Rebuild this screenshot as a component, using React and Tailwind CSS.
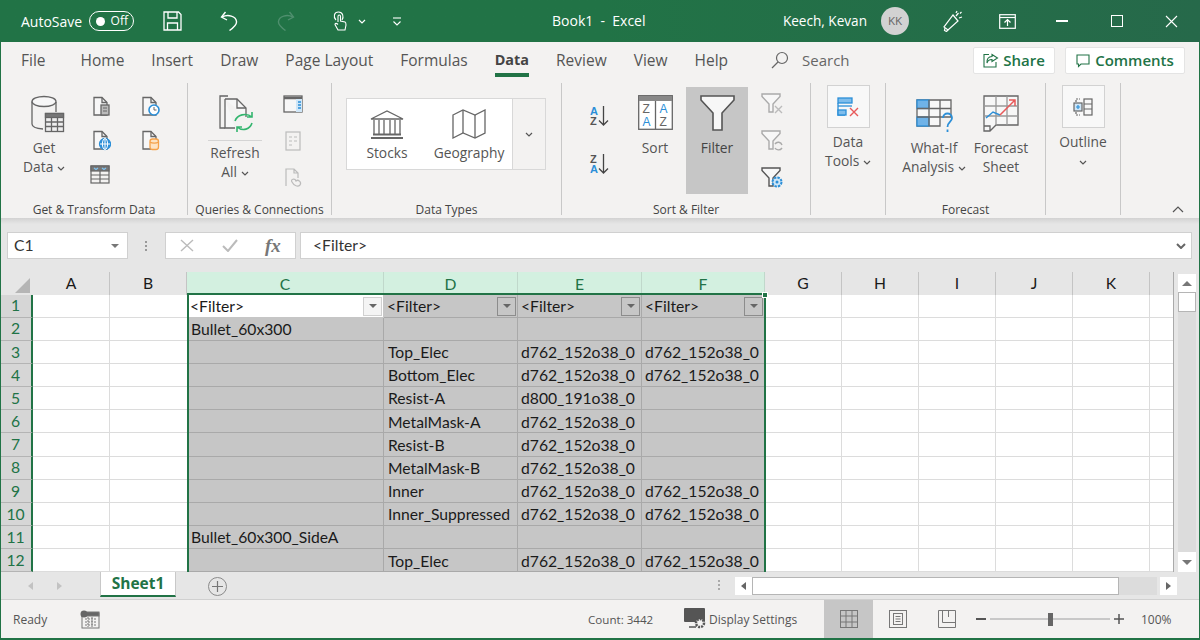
import React from "react";

const G = "#666";
const BLUE = "#2b8fd8";
const Doc = ({ c = G, children, w = 20, h = 22 }) => (
  <svg width={w} height={h} viewBox="0 0 20 22" fill="none" strokeWidth="1.3">
    <path d="M3 1.5H11L16 6.5V19H3Z" stroke={c} fill="#f7f7f7" />
    <path d="M11 1.5V6.5H16" stroke={c} />
    {children}
  </svg>
);
const Chev = ({ className = "", c = "#555" }) => (
  <svg width="8" height="5" viewBox="0 0 8 5" className={className}><path d="M1 1L4 4L7 1" stroke={c} fill="none" strokeWidth="1.2" /></svg>
);
const Funnel = ({ c = "#aaa", children }) => (
  <svg width="24" height="24" viewBox="0 0 24 24" fill="none" strokeWidth="1.4">
    <path d="M2 3H20V5.5L13 13V21H9V13L2 5.5Z" stroke={c} fill="#f7f7f7" />
    {children}
  </svg>
);
const Tab = ({ children, active, className = "" }) => (
  <div className={`h-[35px] pt-[6px] leading-[24px] border-b-[4px] ${active ? "border-[#217346] font-bold text-[#444] text-[14.4px]" : "border-transparent text-[#555]"} ${className}`}>{children}</div>
);
const Group = ({ w, label, children }) => (
  <div style={{ width: w }} className="h-[132px] border-r border-[#c8c8c8] flex flex-col shrink-0">
    <div className="flex-1 flex min-h-0">{children}</div>
    <div className="h-[15px] -mb-[1.5px] text-center text-[12px] leading-[15px] text-[#444] whitespace-nowrap">{label}</div>
  </div>
);
const BoxBtn = ({ children, label }) => (
  <div className="w-[74px] flex flex-col items-center">
    <div className="mt-[2px] w-[43px] h-[43px] bg-[#f8f8f8] border border-[#d2d2d2] flex items-center justify-center">{children}</div>
    <div className="mt-[4px] leading-[19px] text-[13.8px] text-[#555] text-center">{label}</div>
  </div>
);

const rows = [
  ["<Filter>", "<Filter>", "<Filter>", "<Filter>"],
  ["Bullet_60x300", "", "", ""],
  ["", "Top_Elec", "d762_152o38_0", "d762_152o38_0"],
  ["", "Bottom_Elec", "d762_152o38_0", "d762_152o38_0"],
  ["", "Resist-A", "d800_191o38_0", ""],
  ["", "MetalMask-A", "d762_152o38_0", ""],
  ["", "Resist-B", "d762_152o38_0", ""],
  ["", "MetalMask-B", "d762_152o38_0", ""],
  ["", "Inner", "d762_152o38_0", "d762_152o38_0"],
  ["", "Inner_Suppressed", "d762_152o38_0", "d762_152o38_0"],
  ["Bullet_60x300_SideA", "", "", ""],
  ["", "Top_Elec", "d762_152o38_0", "d762_152o38_0"],
];
const colHead = ["A", "B", "C", "D", "E", "F", "G", "H", "I", "J", "K", ""];
const gridCols = "grid-cols-[32px_77px_77px_197px_134px_124px_123px_77px_77px_77px_77px_77px_24px]";

const Dd = ({ white }) => (
  <div className={`w-[19px] h-[19px] shrink-0 mr-[1px] -mt-[1px] border flex items-center justify-center ${white ? "bg-[#f4f4f4] border-[#d0d0d0]" : "bg-[#c6c6c6] border-[#8c8c8c]"}`}>
    <div className="w-0 h-0 border-x-[4px] border-x-transparent border-t-[4px] border-t-[#666]" />
  </div>
);

export default function App() {
  return (
    <div className="w-[1200px] h-[640px] overflow-hidden flex flex-col bg-[#217346] pl-[1px] pr-[1px] pb-[2px] font-['Open_Sans',sans-serif]">
      {/* Title bar */}
      <div className="h-[42px] -ml-[1px] -mr-[1px] shrink-0 flex items-center text-white text-[14px] bg-linear-to-r from-[#217346] via-[#217346] to-[#26694a]">
        <span className="ml-[21px] w-[61px] whitespace-nowrap">AutoSave</span>
        <div className="ml-[7px] w-[45px] h-[20px] rounded-full border border-white flex items-center justify-between pl-[6px] pr-[5px]">
          <div className="w-[9px] h-[9px] bg-white rounded-full" />
          <span className="text-[12px] leading-none">Off</span>
        </div>
        <svg className="ml-[29px]" width="19" height="20" viewBox="0 0 19 20" fill="none" stroke="#fff" strokeWidth="1.3"><path d="M1 1H15.5L18 3.5V19H1Z" /><path d="M5 1V7H14V1M4.5 19V12H14.5V19" /></svg>
        <svg className="ml-[38px]" width="18" height="20" viewBox="0 0 18 20" fill="none" stroke="#fff" strokeWidth="1.4"><path d="M5.5 1L1.5 6L7 9" /><path d="M2 6C8 3 16 5 16.5 10.5C17 14 13 17 9.5 19.5" /></svg>
        <svg className="ml-[39px]" width="18" height="20" viewBox="0 0 18 20" fill="none" stroke="#4f8f6e" strokeWidth="1.4"><path d="M12.5 1L16.5 6L11 9" /><path d="M16 6C10 3 2 5 1.5 10.5C1 14 5 17 8.5 19.5" /></svg>
        <svg className="ml-[38px]" width="14" height="20" viewBox="0 0 14 20" fill="none" stroke="#fff" strokeWidth="1.1"><path d="M3 9C0 6 1 1 5.5 1C10 1 11 6 9 9" /><path d="M5 11V5.5C5 3.5 7.5 3.5 7.5 5.5V10L12 11C13 11.5 13 13 13 14L12 19H5L2 13.5C2 12 3.5 12 5 13.5" /></svg>
        <Chev className="ml-[11px]" c="#fff" />
        <svg className="ml-[26px]" width="10" height="9" viewBox="0 0 10 9" fill="none" stroke="#fff" strokeWidth="1.1"><path d="M1 1H9" /><path d="M1.5 4.5L5 8L8.5 4.5" /></svg>
        <span className="ml-[150px] -mt-[1px] whitespace-nowrap">Book1&nbsp; -&nbsp; Excel</span>
        <div className="ml-auto flex items-center pr-[22px]">
          <span className="whitespace-nowrap text-[13.6px]">Keech, Kevan</span>
          <div className="ml-[14px] w-[28px] h-[28px] rounded-full bg-[#d2d2d2] text-[#666] text-[11.5px] flex items-center justify-center">KK</div>
          <svg className="ml-[34px]" width="20" height="22" viewBox="0 0 20 22" fill="none" stroke="#fff" strokeWidth="1.2"><path d="M10 5L15 11L5 20L1 17Z" /><path d="M5 20L3.5 21.5L1.5 20.5L2 18" /><path d="M13 6L15.5 3M16 8L19 7M13 3L14 1M17 3.5L18.5 2" /></svg>
          <svg className="ml-[36px]" width="17" height="15" viewBox="0 0 17 15" fill="none" stroke="#fff" strokeWidth="1.2"><rect x="0.7" y="0.7" width="15.6" height="13.6" /><path d="M1 3.5H16" /><path d="M8.5 12V6M5.5 8.5L8.5 5.5L11.5 8.5" /></svg>
          <div className="ml-[40px] w-[12px] h-[1.5px] bg-white" />
          <div className="ml-[43px] w-[12px] h-[12px] border border-white" />
          <svg className="ml-[42px]" width="13" height="13" viewBox="0 0 13 13" stroke="#fff" strokeWidth="1.1"><path d="M1 1L12 12M12 1L1 12" /></svg>
        </div>
      </div>

      {/* Ribbon */}
      <div className="h-[176px] shrink-0 bg-[#f3f2f1]">
        <div className="h-[41px] flex items-start text-[15.5px] pl-[20px]">
          <div className="flex gap-[27px]">
            <Tab className="mr-[8px]">File</Tab>
            {["Home", "Insert", "Draw", "Page Layout", "Formulas"].map((t) => <Tab key={t}>{t}</Tab>)}
            <Tab active>Data</Tab>
            {["Review", "View", "Help"].map((t) => <Tab key={t}>{t}</Tab>)}
          </div>
          <div className="ml-[43px] h-[35px] flex items-center text-[#666] pt-[1px] text-[15px]">
            <svg width="18" height="18" viewBox="0 0 18 18" fill="none" stroke="#666" strokeWidth="1.2"><circle cx="11" cy="7" r="5.5" /><path d="M7 11L1 17" /></svg>
            <span className="ml-[13px]">Search</span>
          </div>
          <div className="ml-auto mt-[5px] flex gap-[10px] pr-[14px] font-semibold text-[#217346] text-[15px]">
            <div className="w-[82px] h-[27px] bg-white border border-[#e4e4e4] rounded-[2px] flex items-center justify-center gap-[4px]">
              <svg width="16" height="15" viewBox="0 0 16 15" fill="none" stroke="#217346" strokeWidth="1.1"><path d="M9 1.5L14.5 5L9 8.5V6.5C6 6.5 4.5 8 4 10C3.5 6 5.5 3.5 9 3.5Z" /><path d="M6 1.5H1V14H13V9" /></svg>
              <span>Share</span>
            </div>
            <div className="w-[120px] h-[27px] bg-white border border-[#e4e4e4] rounded-[2px] flex items-center justify-center gap-[5px]">
              <svg width="14" height="14" viewBox="0 0 14 14" fill="none" stroke="#217346" strokeWidth="1.1"><path d="M1 1H13V10H5L2.5 12.5V10H1Z" /></svg>
              <span>Comments</span>
            </div>
          </div>
        </div>

        <div className="h-[132px] flex">
          <Group w={187} label="Get & Transform Data">
            <div className="w-[86px] flex flex-col items-center pt-[12px]">
              <svg className="ml-[7px]" width="34" height="38" viewBox="0 0 34 38" fill="none" stroke={G} strokeWidth="1.3">
                <ellipse cx="13" cy="6.5" rx="12" ry="5" fill="#f7f7f7" />
                <path d="M1 6.5V29C1 31.5 5 33.5 12 34M25 7V17" />
                <rect x="14.5" y="18.5" width="18" height="18" fill="#eee" />
                <rect x="14.5" y="18.5" width="18" height="4" fill="#777" />
                <path d="M14.5 27H32.5M14.5 31.5H32.5M20.5 22V36.5M26.5 22V36.5" />
              </svg>
              <div className="mt-[5px] leading-[19px] text-[13.8px] text-[#555] text-center">Get<br />Data <Chev className="inline align-middle" /></div>
            </div>
            <div className="ml-[4px] w-[20px] flex flex-col gap-[12px] pt-[13px]">
              <Doc><rect x="10" y="9" width="8" height="10" fill="#bbb" stroke={G} /><path d="M12 12H16M12 15H16" stroke={G} strokeWidth="1" /></Doc>
              <Doc><circle cx="14" cy="14" r="5.5" fill={BLUE} stroke={BLUE} /><path d="M9 14H19M14 9V19" stroke="#fff" strokeWidth="1" /><ellipse cx="14" cy="14" rx="2.6" ry="5.5" stroke="#fff" strokeWidth="1" /></Doc>
              <svg className="-ml-[1px]" width="20" height="20" viewBox="0 0 20 20" fill="none" stroke={G} strokeWidth="1.2"><rect x="1" y="2" width="18" height="17" /><rect x="1" y="2" width="18" height="5" fill="#777" /><path d="M1 11H19M1 15H19M10 7V19" /><path d="M4 4L6 5.5L8 4M12 4L14 5.5L16 4" stroke="#7fc4f2" /></svg>
            </div>
            <div className="ml-[29px] w-[20px] flex flex-col gap-[12px] pt-[13px]">
              <Doc><circle cx="14" cy="14" r="5" fill="#fff" stroke={BLUE} strokeWidth="1.6" /><path d="M14 11V14H16.5" stroke={G} strokeWidth="1" /></Doc>
              <Doc><rect x="10" y="9" width="8.5" height="10.5" rx="2.5" fill="#fde3c4" stroke="#f5a24a" /><path d="M10 12C12 13.5 16.5 13.5 18.5 12" stroke="#f5a24a" /></Doc>
            </div>
          </Group>

          <Group w={144} label="Queries & Connections">
            <div className="ml-[10px] w-[74px] flex flex-col items-center pt-[12px]">
              <svg className="ml-[3px]" width="36" height="38" viewBox="0 0 36 38" fill="none" strokeWidth="1.3">
                <path d="M9 1H1V33H6" stroke={G} />
                <path d="M6 4H18L27 13V22M16 33H6V4" stroke={G} fill="#f7f7f7" />
                <path d="M18 4V13H27" stroke={G} />
                <path d="M16 26C18 20 27 17 33 22M33 17V22H28" stroke="#33b56e" strokeWidth="1.6" />
                <path d="M33 28C31 34 24 37 18 32M18 37V32H23" stroke="#33b56e" strokeWidth="1.6" />
              </svg>
              <div className="mt-[7px] w-[54px] h-px bg-[#d4d4d4]" />
              <div className="mt-[2px] leading-[19px] text-[13.8px] text-[#555] text-center">Refresh<br />All <Chev className="inline align-middle" /></div>
            </div>
            <div className="ml-[11px] w-[20px] flex flex-col gap-[17px] pt-[11px]">
              <svg width="20" height="20" viewBox="0 0 20 20" fill="none" stroke={G} strokeWidth="1.3"><rect x="1" y="2" width="18" height="16" fill="#f7f7f7" /><path d="M1 4H19" strokeWidth="2.5" /><rect x="13" y="5" width="6" height="13" fill="#cfe6f7" stroke="none" /><path d="M15 8H18M15 11H18M15 14H18" stroke={BLUE} /></svg>
              <svg width="20" height="20" viewBox="0 0 20 20" fill="none" stroke="#bbb" strokeWidth="1.2"><rect x="3" y="1" width="14" height="18" /><path d="M6 6H9M11 6H14M6 10H9M11 10H14M6 14H9" /></svg>
              <svg width="20" height="20" viewBox="0 0 20 20" fill="none" stroke="#bbb" strokeWidth="1.2"><path d="M3 18V1H11L15 5V10M11 1V5H15" /><path d="M9 14C7 11 12 10 13 13C15 11 19 14 17 17C15 19 11 18 9 14Z" /></svg>
            </div>
          </Group>

          <Group w={230} label="Data Types">
            <div className="ml-[14px] mt-[15px] w-[200px] h-[72px] flex bg-white border-[1.5px] border-[#d8d8d8] text-[13.8px] text-[#555]">
              <div className="w-[80px] flex flex-col items-center pt-[10px]">
                <svg width="34" height="30" viewBox="0 0 34 30" fill="none" stroke={G} strokeWidth="1.3"><path d="M1 10L17 2L33 10Z" /><path d="M4 11V25M9 11V25M14 11V25M20 11V25M25 11V25M30 11V25" /><path d="M3 25.5H31M1 29H33" strokeWidth="2" /></svg>
                <span className="mt-[4px] leading-[20px]">Stocks</span>
              </div>
              <div className="w-[84px] flex flex-col items-center pt-[10px]">
                <svg width="34" height="30" viewBox="0 0 34 30" fill="none" stroke={G} strokeWidth="1.3"><path d="M1 6L11 1L23 6L33 1V24L23 29L11 24L1 29Z" /><path d="M11 1V24M23 6V29" /></svg>
                <span className="mt-[4px] leading-[20px] whitespace-nowrap">Geography</span>
              </div>
              <div className="ml-auto w-[33px] border-l-[1.5px] border-[#d8d8d8] bg-[#f3f2f1] flex items-center justify-center">
                <Chev />
              </div>
            </div>
          </Group>

          <Group w={249} label="Sort & Filter">
            <div className="ml-[24px] w-[24px] flex flex-col gap-[24px] pt-[21px]">
              <svg width="24" height="24" viewBox="0 0 24 24" fill="none"><text x="4" y="11" fontSize="11" fontWeight="700" fill={BLUE} fontFamily="Liberation Sans">A</text><text x="4" y="21" fontSize="11" fontWeight="700" fill="#555" fontFamily="Liberation Sans">Z</text><path d="M17.5 2V21M13 16.5L17.5 21L22 16.5" stroke="#444" strokeWidth="1.3" /></svg>
              <svg width="24" height="24" viewBox="0 0 24 24" fill="none"><text x="4" y="11" fontSize="11" fontWeight="700" fill="#555" fontFamily="Liberation Sans">Z</text><text x="4" y="21" fontSize="11" fontWeight="700" fill={BLUE} fontFamily="Liberation Sans">A</text><path d="M17.5 2V21M13 16.5L17.5 21L22 16.5" stroke="#444" strokeWidth="1.3" /></svg>
            </div>
            <div className="ml-[20px] w-[50px] flex flex-col items-center pt-[12px]">
              <svg width="35" height="35" viewBox="0 0 35 35"><rect x="0.7" y="0.7" width="33.6" height="33.6" fill="#fff" stroke={G} strokeWidth="1.3" /><rect x="1" y="1" width="33" height="5" fill="#888" /><path d="M17.5 6V34" stroke={G} strokeWidth="1.3" /><g fontFamily="Liberation Sans" fontSize="12"><text x="4.5" y="18" fill="#666">Z</text><text x="4.5" y="31" fill={BLUE}>A</text><text x="21.5" y="18" fill={BLUE}>A</text><text x="21.5" y="31" fill="#666">Z</text></g></svg>
              <span className="mt-[8px] leading-[20px] text-[13.8px] text-[#555]">Sort</span>
            </div>
            <div className="ml-[6px] mt-[4px] w-[62px] h-[107px] bg-[#c6c6c6] flex flex-col items-center pt-[8px]">
              <svg width="35" height="36" viewBox="0 0 35 36" fill="none" stroke="#555" strokeWidth="1.6"><path d="M1 1H34V5L22 18V35H13V18L1 5Z" fill="#f7f7f7" /></svg>
              <span className="mt-[7px] leading-[20px] text-[13.8px] text-[#444]">Filter</span>
            </div>
            <div className="ml-[12px] w-[24px] flex flex-col gap-[13px] pt-[8px]">
              <Funnel><path d="M15 15L22 22M22 15L15 22" stroke="#bbb" /></Funnel>
              <Funnel><path d="M15 16C17 13 21 14 22 17M22 20C20 23 16 22 15 20" stroke="#aaa" fill="none" /></Funnel>
              <Funnel c="#555"><circle cx="17" cy="17" r="4.5" fill="#cfe6f7" stroke={BLUE} strokeWidth="2" strokeDasharray="2.5 1" /><circle cx="17" cy="17" r="1.5" fill={BLUE} stroke="none" /></Funnel>
            </div>
          </Group>

          <Group w={75} label="">
            <BoxBtn label={<>Data<br />Tools <Chev className="inline align-middle" /></>}>
              <svg width="22" height="20" viewBox="0 0 22 20" fill="none" strokeWidth="1.3"><rect x="1" y="1" width="14" height="5" fill="#7fbdec" stroke={BLUE} /><path d="M1 6V18H8" stroke={BLUE} /><rect x="1" y="13" width="8" height="5" fill="#7fbdec" stroke={BLUE} /><path d="M1 9H15" stroke={BLUE} /><path d="M13 11L21 19M21 11L13 19" stroke="#e8595a" strokeWidth="1.4" /></svg>
            </BoxBtn>
          </Group>

          <Group w={160} label="Forecast">
            <div className="ml-[14px] w-[68px] flex flex-col items-center pt-[12px]">
              <svg width="38" height="38" viewBox="0 0 38 38" fill="none" strokeWidth="1.3" className="ml-[2px]">
                <path d="M1 5H35V22H24V31H1Z" fill="#f7f7f7" stroke={G} />
                <rect x="1" y="5" width="12" height="8.5" fill="#6fb3e8" stroke={BLUE} />
                <rect x="1" y="22" width="12" height="9" fill="#6fb3e8" stroke={BLUE} />
                <path d="M13 5V31M24 5V22M1 13.5H35M1 22H24" stroke={G} />
                <path d="M27 23C27 17 36 17 36 23C36 27 31.5 27 31.5 32M31.5 34.5V37" stroke={BLUE} strokeWidth="1.8" />
              </svg>
              <div className="mt-[5px] leading-[19px] text-[13.8px] text-[#555] text-center whitespace-nowrap">What-If<br />Analysis <Chev className="inline align-middle" /></div>
            </div>
            <div className="w-[66px] flex flex-col items-center pt-[12px]">
              <svg width="36" height="38" viewBox="0 0 36 38" fill="none" strokeWidth="1.3">
                <path d="M1 31V1H35V30H13L7 36H1V31H7V36" stroke={G} fill="#f7f7f7" />
                <path d="M1 11H35M1 21H35M13 1V30M24 1V30" stroke="#999" />
                <path d="M3 23L10 17L17 20" stroke={BLUE} strokeWidth="1.5" />
                <path d="M17 20L24 13L32 5M26 5H32V11" stroke="#e8595a" strokeWidth="1.5" />
              </svg>
              <div className="mt-[5px] leading-[19px] text-[13.8px] text-[#555] text-center">Forecast<br />Sheet</div>
            </div>
          </Group>

          <Group w={75} label="">
            <BoxBtn label={<>Outline<br /><Chev className="inline align-middle" /></>}>
              <svg width="20" height="18" viewBox="0 0 20 18" fill="none" stroke={G} strokeWidth="1.2"><path d="M3 4V1H7M3 14V17H7" strokeDasharray="2 1" /><rect x="1" y="5" width="8" height="8" fill="#cfe6f7" /><path d="M3 9H7M5 7V11" stroke={BLUE} /><rect x="11" y="1" width="8" height="16" /><path d="M11 6H19M11 11H19" /></svg>
            </BoxBtn>
          </Group>

          <div className="flex-1 flex items-end justify-end pr-[15px] pb-[2px]">
            <svg width="12" height="7" viewBox="0 0 12 7" fill="none" stroke="#555" strokeWidth="1.2"><path d="M1 6L6 1L11 6" /></svg>
          </div>
        </div>
      </div>

      {/* Formula bar */}
      <div className="h-[54px] shrink-0 bg-[#e6e6e6] flex flex-col">
        <div className="h-[6px] bg-linear-to-b from-[#d2d2d2] to-[#e6e6e6]" />
        <div className="mt-[8px] flex items-center h-[27px] text-[15.7px] text-[#333] font-['Lato',sans-serif]">
          <div className="ml-[6px] w-[121px] h-[27px] bg-white border border-[#d0d0d0] flex items-center justify-between pl-[6px] pr-[8px]">
            <span>C1</span>
            <div className="w-0 h-0 border-x-[4px] border-x-transparent border-t-[4px] border-t-[#777]" />
          </div>
          <div className="ml-[17px] flex flex-col gap-[2px]">
            <div className="w-[2px] h-[2px] bg-[#999]" /><div className="w-[2px] h-[2px] bg-[#999]" /><div className="w-[2px] h-[2px] bg-[#999]" />
          </div>
          <div className="ml-[18px] w-[131px] h-[27px] bg-white border border-[#d0d0d0] flex items-center">
            <svg className="ml-[14px]" width="14" height="13" viewBox="0 0 14 13" stroke="#bbb" strokeWidth="1.4"><path d="M1 1L13 12M13 1L1 12" /></svg>
            <svg className="ml-[28px]" width="16" height="13" viewBox="0 0 16 13" fill="none" stroke="#bbb" strokeWidth="2"><path d="M1 7L6 12L15 1" /></svg>
            <span className="ml-[27px] font-['Liberation_Serif',serif] italic font-bold text-[#777] text-[19px] leading-none">fx</span>
          </div>
          <div className="ml-[4px] w-[892px] h-[27px] bg-white border border-[#d0d0d0] flex items-center pl-[12px] pr-[5px] justify-between">
            <span>&lt;Filter&gt;</span>
            <svg width="10" height="6" viewBox="0 0 10 6" fill="none" stroke="#666" strokeWidth="2"><path d="M1 1L5 5L9 1" /></svg>
          </div>
        </div>
      </div>

      {/* Sheet */}
      <div className="h-[300px] shrink-0 flex bg-[#e6e6e6] overflow-hidden">
        <div className="relative w-[1173px] h-[300px] overflow-hidden border-r border-[#aaa] font-['Lato',sans-serif] text-[15.7px] text-[#1a1a1a]">
          <div className={`grid ${gridCols} h-[22.5px]`}>
            <div className="border-b border-[#9b9b9b] flex items-end justify-end pr-[3px] pb-[3px]">
              <div className="w-0 h-0 border-l-[15px] border-l-transparent border-b-[15px] border-b-[#b5b5b5]" />
            </div>
            {colHead.map((c, i) => {
              const sel = i >= 2 && i <= 5;
              return (
                <div key={i} className={`flex items-center justify-center border-r ${sel ? "bg-[#d3f0e0] text-[#217346] border-[#c0d8cb]" : "border-[#c4c4c4] border-b border-b-[#9b9b9b]"} ${i === 11 ? "border-r-0" : ""}`}>{c}</div>
              );
            })}
          </div>
          <div className={`grid ${gridCols} auto-rows-[23.17px]`}>
            {rows.map((r, ri) => (
              <React.Fragment key={ri}>
                <div className="bg-[#d6d6d6] border-r-2 border-r-[#217346] border-b border-b-[#b4b4b4] text-[#217346] flex items-center justify-center pr-[1px] pt-[1px]">{ri + 1}</div>
                <div className="bg-white border-r border-b border-[#dcdcdc]" />
                <div className="bg-white border-b border-[#dcdcdc]" />
                {r.map((t, ci) => {
                  const active = ri === 0 && ci === 0;
                  return (
                    <div key={ci} className={`flex items-center justify-between pl-[3px] pt-[2px] whitespace-nowrap overflow-hidden border-r border-b ${active ? "bg-white border-[#c6c6c6]" : "bg-[#c6c6c6] border-[#a9a9a9]"}`}>
                      <span className={ri === 1 || ri === 10 || (ci === 1 && ri > 0) ? "pl-[1px]" : ""}>{t}</span>
                      {ri === 0 && <Dd white={active} />}
                    </div>
                  );
                })}
                {[0, 1, 2, 3, 4].map((k) => <div key={k} className="bg-white border-r border-b border-[#dcdcdc]" />)}
                <div className="bg-white border-b border-[#dcdcdc]" />
              </React.Fragment>
            ))}
          </div>
          {/* selection outline */}
          <div className="absolute left-[185.5px] top-[21px] w-[579.5px] h-[290px] border-2 border-[#217346] pointer-events-none" />
          <div className="absolute left-[761px] top-[20px] w-[6px] h-[6px] bg-[#217346] border border-white" />
        </div>
        <div className="ml-[4px] w-[18px] h-[300px] flex flex-col bg-[#dcdcdc] mt-[2px]">
          <div className="h-[18px] bg-white flex items-center justify-center">
            <div className="w-0 h-0 border-x-[5px] border-x-transparent border-b-[5px] border-b-[#777]" />
          </div>
          <div className="h-[20px] bg-white border border-[#b5b5b5]" />
          <div className="flex-1" />
          <div className="h-[20px] mb-[2px] bg-white flex items-center justify-center">
            <div className="w-0 h-0 border-x-[5px] border-x-transparent border-t-[5px] border-t-[#777]" />
          </div>
        </div>
      </div>

      {/* Sheet tabs */}
      <div className="h-[28px] shrink-0 bg-[#e6e6e6] border-b border-[#d0d0d0] flex items-start">
        <div className="w-0 h-0 ml-[27px] mt-[10px] border-y-[4px] border-y-transparent border-r-[5px] border-r-[#c2c2c2]" />
        <div className="w-0 h-0 ml-[24px] mt-[10px] border-y-[4px] border-y-transparent border-l-[5px] border-l-[#c2c2c2]" />
        <div className="ml-[38px] w-[76px] h-[25px] bg-white border-x border-b-2 border-x-[#c8c8c8] border-b-[#217346] text-[#217346] font-bold text-[15.5px] flex items-center justify-center">Sheet1</div>
        <div className="ml-[32px] mt-[5px] w-[19px] h-[19px] rounded-full border-[1.5px] border-[#8a8a8a] flex items-center justify-center text-[#777]">
          <svg width="11" height="11" viewBox="0 0 11 11" stroke="#777" strokeWidth="1.2"><path d="M5.5 0V11M0 5.5H11" /></svg>
        </div>
        <div className="ml-[491px] mt-[8px] flex flex-col gap-[2px]">
          <div className="w-[2px] h-[2px] bg-[#aaa]" /><div className="w-[2px] h-[2px] bg-[#aaa]" /><div className="w-[2px] h-[2px] bg-[#aaa]" />
        </div>
        <div className="ml-[15px] mt-[5px] flex h-[18px]">
          <div className="w-[17px] bg-white flex items-center justify-center">
            <div className="w-0 h-0 border-y-[4px] border-y-transparent border-r-[5px] border-r-[#666]" />
          </div>
          <div className="w-[367px] bg-[#ffffff] border border-[#b5b5b5]" />
          <div className="w-[38px] bg-[#dcdcdc]" />
          <div className="ml-[3px] w-[17px] bg-white flex items-center justify-center">
            <div className="w-0 h-0 border-y-[4px] border-y-transparent border-l-[5px] border-l-[#666]" />
          </div>
        </div>
      </div>

      {/* Status bar */}
      <div className="flex-1 bg-[#f3f2f1] flex items-center text-[12px] text-[#555]">
        <span className="ml-[12px] w-[35px] pt-[2px]">Ready</span>
        <svg className="ml-[32px]" width="20" height="19" viewBox="0 0 20 19" fill="none" stroke="#777" strokeWidth="1"><rect x="2" y="3" width="17" height="15" /><rect x="2" y="2" width="17" height="4" fill="#666" /><circle cx="4" cy="4" r="3.5" fill="#666" stroke="none" /><path d="M5 9H17M5 12H17M5 15H17M8 7V17M12 7V17" strokeDasharray="2 1" /></svg>
        <span className="ml-[488px] w-[65px] text-[11.6px] whitespace-nowrap pt-[2px]">Count: 3442</span>
        <svg className="ml-[31px]" width="23" height="22" viewBox="0 0 23 22" fill="none"><rect x="0" y="0" width="21" height="14" rx="1" fill="#555" /><path d="M5 19H12" stroke="#555" strokeWidth="1.5" /><circle cx="16" cy="15" r="4" stroke="#555" strokeWidth="2.5" strokeDasharray="2 1" fill="#f3f2f1" /></svg>
        <span className="ml-[2px] w-[89px] whitespace-nowrap pt-[2px]">Display Settings</span>
        <div className="ml-[26px] w-[49px] h-full bg-[#c6c6c6] flex items-center justify-center">
          <svg width="18" height="18" viewBox="0 0 18 18" fill="none" stroke="#777" strokeWidth="1"><rect x="0.5" y="0.5" width="17" height="17" /><path d="M6 0V18M12 0V18M0 6H18M0 12H18" /></svg>
        </div>
        <svg className="ml-[16px]" width="18" height="18" viewBox="0 0 18 18" fill="none" stroke="#777" strokeWidth="1"><rect x="0.5" y="0.5" width="17" height="17" /><rect x="4.5" y="3.5" width="9" height="11" /><path d="M6.5 6.5H11.5M6.5 9H11.5M6.5 11.5H11.5" /></svg>
        <svg className="ml-[31px]" width="18" height="18" viewBox="0 0 18 18" fill="none" stroke="#777" strokeWidth="1"><path d="M0.5 0.5H17.5V17.5H0.5ZM4.5 0.5V12.5H17.5M10.5 0.5V7" /></svg>
        <div className="ml-[20px] w-[10px] h-[2px] bg-[#555]" />
        <div className="ml-[4px] w-[120px] h-[2px] bg-[#c8c8c8] flex items-center">
          <div className="ml-[58px] w-[5px] h-[13px] bg-[#666] shrink-0" />
        </div>
        <svg className="ml-[4px]" width="10" height="10" viewBox="0 0 10 10" stroke="#555" strokeWidth="1.5"><path d="M5 0V10M0 5H10" /></svg>
        <span className="ml-[17px] pt-[2px]">100%</span>
      </div>
    </div>
  );
}
